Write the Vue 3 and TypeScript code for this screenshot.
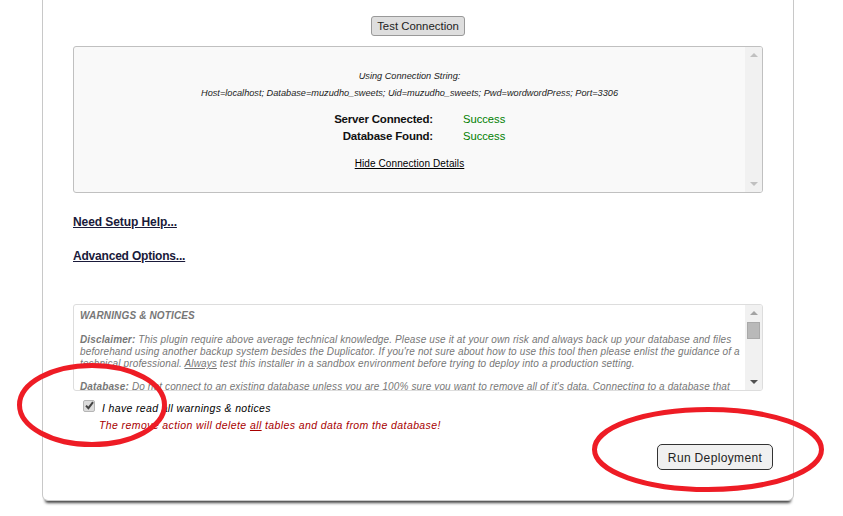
<script setup lang="ts">
const overlays = [
  { cx: 92, cy: 405, rx: 72.5, ry: 39.5 },
  { cx: 708, cy: 449.5, rx: 113.5, ry: 40 },
]
</script>

<template>
  <div class="page">
    <main class="card">
      <div class="test-row"><button class="btn test" type="button">Test Connection</button></div>

      <section class="box details">
        <div class="box-body center">
          <p class="conn first">Using Connection String:</p>
          <p class="conn second">Host=localhost; Database=muzudho_sweets; Uid=muzudho_sweets; Pwd=wordwordPress; Port=3306</p>
          <div class="status top"><b>Server Connected:</b><span>Success</span></div>
          <div class="status"><b>Database Found:</b><span>Success</span></div>
          <a class="hide">Hide Connection Details</a>
        </div>
        <div class="scrollbar">
          <i class="arrow up dim"></i>
          <i class="arrow down dim"></i>
        </div>
      </section>

      <a class="section-link help">Need Setup Help...</a>
      <a class="section-link adv">Advanced Options...</a>

      <section class="box warnings">
        <div class="box-body notes">
          <b class="w-title">WARNINGS &amp; NOTICES</b>
          <p class="note"><b>Disclaimer:</b> This plugin require above average technical knowledge. Please use it at your own risk and always back up your database and files beforehand using another backup system besides the Duplicator. If you're not sure about how to use this tool then please enlist the guidance of a technical professional. <u>Always</u> test this installer in a sandbox environment before trying to deploy into a production setting.</p>
          <p class="note"><b>Database:</b> Do not connect to an existing database unless you are 100% sure you want to remove all of it's data. Connecting to a database that</p>
        </div>
        <div class="scrollbar">
          <i class="arrow up"></i>
          <i class="thumb"></i>
          <i class="arrow down dark"></i>
        </div>
      </section>

      <div class="confirm">
        <span class="check" role="checkbox" aria-checked="true">
          <svg width="9" height="9" viewBox="0 0 9 9"><path d="M1 4.6 3.4 7.2 8 1.2" /></svg>
        </span>
        <span>I have read all warnings &amp; notices</span>
      </div>
      <p class="danger">The remove action will delete <u>all</u> tables and data from the database!</p>

      <div class="run-row"><button class="btn run" type="button">Run Deployment</button></div>
    </main>

    <svg class="marks" width="843" height="516" viewBox="0 0 843 516" aria-hidden="true">
      <ellipse v-for="(m, i) in overlays" :key="i" :cx="m.cx" :cy="m.cy" :rx="m.rx" :ry="m.ry" />
    </svg>
  </div>
</template>

<style>
html, body { margin: 0; background: #fff; }
</style>

<style scoped>
.page {
  position: relative;
  width: 843px;
  height: 516px;
  overflow: hidden;
  font-family: "Liberation Sans", Arial, sans-serif;
  color: #000;
}
.card {
  box-sizing: border-box;
  width: 752px;
  height: 501px;
  margin-left: 42px;
  padding: 16px 30px 0;
  border: 1px solid #c8c8c8;
  border-top: 0;
  border-radius: 0 0 6px 6px;
  box-shadow: 0 5px 3px -3px #444;
  background: #fff;
}
.test-row { display: flex; justify-content: center; height: 30px; }
.btn {
  font-family: inherit;
  color: #222;
  padding: 0;
  cursor: default;
}
.test {
  width: 94px;
  height: 20px;
  font-size: 11.4px;
  border: 1px solid #999;
  border-radius: 3px;
  background: #dedede;
}
.box {
  box-sizing: border-box;
  display: flex;
  width: 690px;
  border-radius: 3px;
  overflow: hidden;
}
.box-body { flex: 1; min-width: 0; overflow: hidden; }
.details {
  height: 147px;
  border: 1px solid #c0c0c0;
  background: #f9f9f9;
}
.center { text-align: center; padding-top: 22px; }
.conn { margin: 0; font-size: 9.2px; font-style: italic; color: #222; line-height: 14px; }
.second { margin-top: 3px; }
.status {
  display: grid;
  grid-template-columns: 359px 90px;
  column-gap: 30px;
  font-size: 11.5px;
  line-height: 17px;
  text-align: left;
}
.status b { text-align: right; color: #111; letter-spacing: -0.2px; }
.status span { color: #008000; font-size: 11.2px; }
.status.top { margin-top: 11px; }
.hide {
  display: inline-block;
  margin-top: 13px;
  font-size: 10px;
  letter-spacing: 0.1px;
  line-height: 12px;
  color: #000;
  text-decoration: underline;
}
.scrollbar {
  position: relative;
  flex: 0 0 17px;
  display: flex;
  flex-direction: column;
  justify-content: space-between;
  align-items: center;
  padding: 6px 0;
  box-sizing: border-box;
  background: #f1f1f1;
}
.arrow { display: block; width: 0; height: 0; border-left: 4px solid transparent; border-right: 4px solid transparent; }
.up { border-bottom: 4px solid #a3a3a3; }
.down { border-top: 4px solid #a3a3a3; }
.down.dark { border-top-color: #505050; }
.dim.up { border-bottom-color: #c0c0c0; }
.dim.down { border-top-color: #c0c0c0; }
.thumb { position: absolute; left: 2px; top: 17px; width: 13px; height: 17px; background: #b9b9b9; border: 1px solid #a9a9a9; box-sizing: border-box; }
.section-link {
  display: block;
  width: max-content;
  font-size: 12px;
  font-weight: 700;
  letter-spacing: -0.2px;
  line-height: 16px;
  color: #1a1a3a;
  text-decoration: underline;
}
.help { margin-top: 21px; letter-spacing: -0.08px; }
.adv { margin-top: 18px; }
.warnings {
  height: 87px;
  margin-top: 40px;
  border: 1px solid #ddd;
}
.notes {
  padding: 4px 0 0 6px;
  font-size: 10px;
  font-style: italic;
  color: #777;
  line-height: 12px;
}
.w-title { display: block; line-height: 13px; letter-spacing: 0.15px; }
.note { margin: 0; padding-top: 12px; letter-spacing: 0.13px; }
.note + .note { padding-top: 11px; }
.confirm {
  display: flex;
  align-items: center;
  height: 20px;
  margin: 7px 0 0 10px;
  font-size: 10.5px;
  font-style: italic;
  letter-spacing: 0.35px;
}
.check {
  box-sizing: border-box;
  display: flex;
  align-items: center;
  justify-content: center;
  width: 12px;
  height: 12px;
  margin: -5px 7px 0 0;
  border: 1px solid #b5b5b5;
  border-radius: 2px;
  background: #dcdcdc;
}
.check path { fill: none; stroke: #444; stroke-width: 2; }
.danger {
  margin: 1px 0 0 26px;
  font-size: 10.5px;
  font-style: italic;
  letter-spacing: 0.4px;
  line-height: 13px;
  color: #a80000;
}
.run-row { display: flex; justify-content: flex-end; margin-top: 12px; }
.run {
  width: 116px;
  height: 26px;
  margin-right: -10px;
  padding-top: 1px;
  font-size: 12px;
  letter-spacing: 0.35px;
  border: 1px solid #333;
  border-radius: 5px;
  background: #f0f0f0;
}
.marks { position: absolute; inset: 0; pointer-events: none; }
.marks ellipse { fill: none; stroke: #ee1c25; stroke-width: 5; }
</style>
